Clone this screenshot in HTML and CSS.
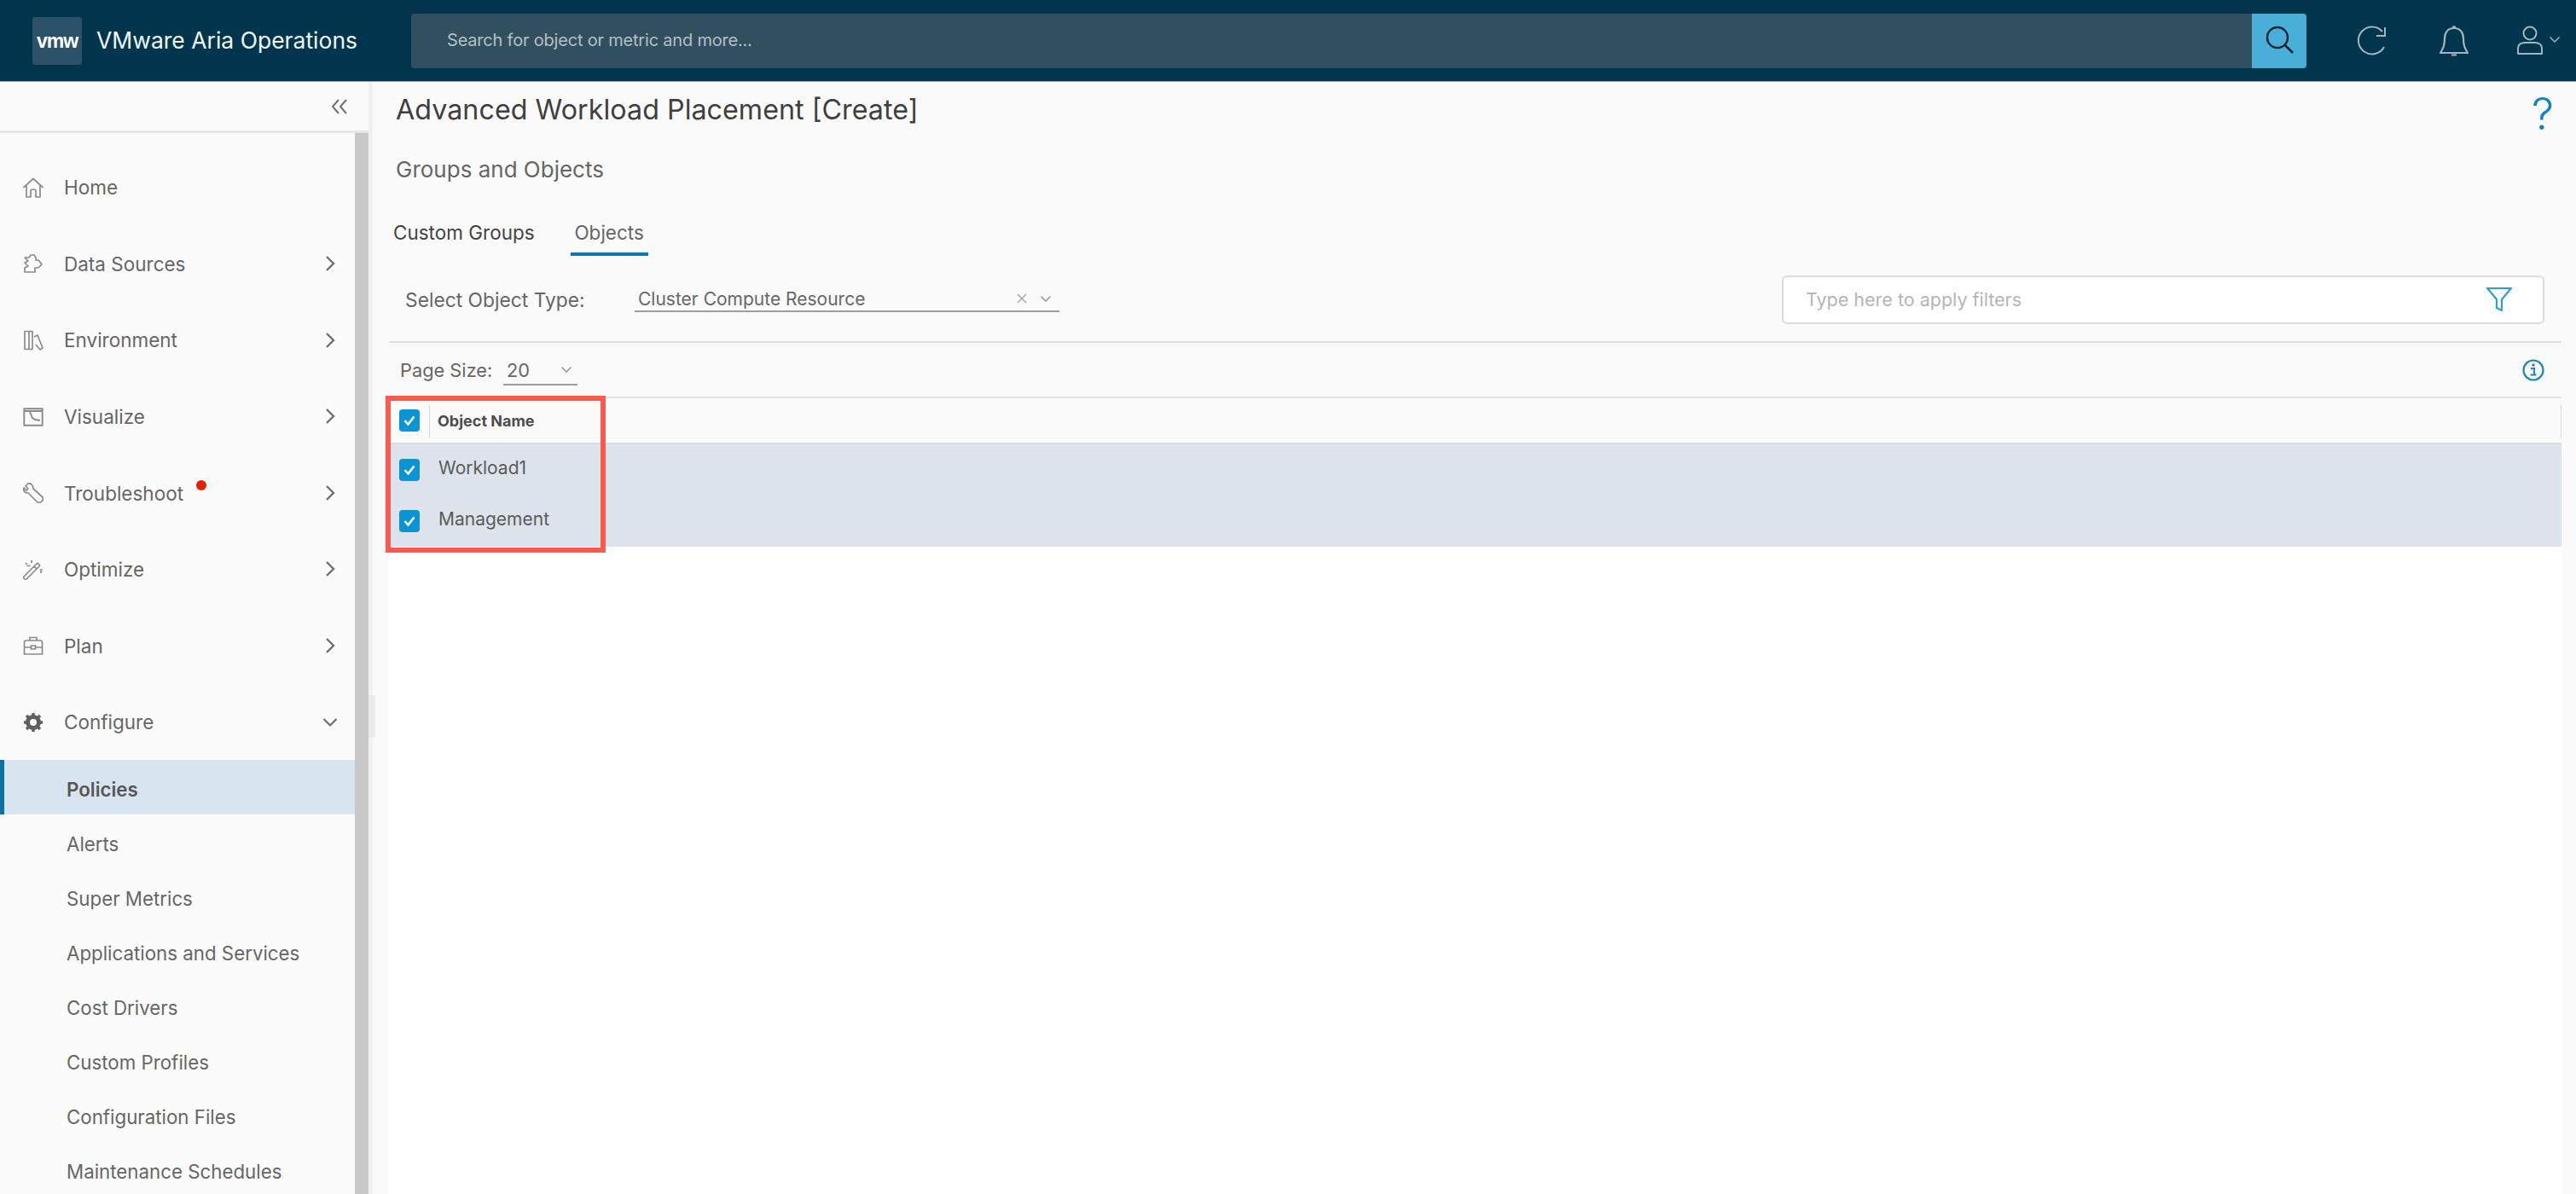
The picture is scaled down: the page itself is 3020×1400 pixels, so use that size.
FILE: index.html
```html
<!DOCTYPE html>
<html lang="en">
<head>
<meta charset="utf-8">
<title>VMware Aria Operations</title>
<link rel="stylesheet" href="styles.css">
</head>
<body>
<svg class="sprite" aria-hidden="true">
  <symbol id="chev-r" viewBox="0 0 12 20"><path d="M2 2l8 8-8 8" fill="none" stroke="#6f6f6f" stroke-width="2.4"/></symbol>
  <symbol id="chk" viewBox="0 0 24 26"><rect width="24" height="26" rx="4" fill="#0a94d3"/><path d="M6.5 13l4 4.5 7-9" fill="none" stroke="#fff" stroke-width="2.6"/></symbol>
  <symbol id="chev-d" viewBox="0 0 14 9"><path d="M1.5 1.5L7 7l5.5-5.5" fill="none" stroke="#9a9a9a" stroke-width="1.6"/></symbol>
</svg>
<header class="topbar">
  <div class="logo">vmw</div>
  <div class="brand">VMware Aria Operations</div>
  <div class="search">
    <span class="search-text">Search for object or metric and more...</span>
    <span class="search-btn">
      <svg width="34" height="36" viewBox="0 0 34 36"><circle cx="14" cy="14" r="12" fill="none" stroke="#12222c" stroke-width="2.4"/><path d="M23 23l9 9" stroke="#12222c" stroke-width="2.6"/></svg>
    </span>
  </div>
  <div class="top-icons">
    <svg class="ti-refresh" width="36" height="36" viewBox="0 0 36 36"><path d="M32 25A16 16 0 1 1 30 7" fill="none" stroke="#a6b4bb" stroke-width="2"/><path d="M33 2v10H23" fill="none" stroke="#a6b4bb" stroke-width="2"/></svg>
    <svg class="ti-bell" width="36" height="38" viewBox="0 0 36 38"><path d="M18 4c-7 0-11 5-11 12 0 9-2 12-5 17h32c-3-5-5-8-5-17 0-7-4-12-11-12zM16 2.500h4M15 35.500h6" fill="none" stroke="#a6b4bb" stroke-width="2.200" stroke-linejoin="round"/></svg>
    <span class="user">
      <svg width="32" height="36" viewBox="0 0 32 36"><circle cx="16" cy="9" r="7.500" fill="none" stroke="#a6b4bb" stroke-width="2"/><path d="M2 33v-6c0-5 4-7 8-7h12c4 0 8 2 8 7v6z" fill="none" stroke="#a6b4bb" stroke-width="2" stroke-linejoin="round"/></svg>
      <svg class="user-chev" width="14" height="9" viewBox="0 0 14 9"><path d="M1.500 1.500L7 7l5.500-5.500" fill="none" stroke="#a6b4bb" stroke-width="1.500"/></svg>
    </span>
  </div>
</header>
<div class="app">
  <aside class="sidebar">
    <div class="collapse">
      <svg width="20" height="20" viewBox="0 0 20 20"><path d="M9 2L2 10l7 8M18 2l-7 8 7 8" fill="none" stroke="#707070" stroke-width="2"/></svg>
    </div>
    <div class="side-body">
      <nav class="nav">
        <a class="nav-item"><svg class="nav-ic" viewBox="0 0 24 24"><path d="M.5 12L12 1.500 23.500 12M4 9.500V23h5v-7q0-2 3-2t3 2v7h5V9.500" fill="none" stroke="#8a8a8a" stroke-width="1.700" stroke-linejoin="round"/></svg><span>Home</span></a>
        <a class="nav-item"><svg class="nav-ic" viewBox="0 0 24 24"><path d="M2 5h5l2-3h4l2 3v3h3l4 5-4 4h-4v5H2v-5l4-2-4-4 4-2z" fill="none" stroke="#8a8a8a" stroke-width="1.700" stroke-linejoin="round"/></svg><span>Data Sources</span><svg class="nav-chev"><use href="#chev-r"/></svg></a>
        <a class="nav-item"><svg class="nav-ic" viewBox="0 0 24 24"><path d="M2 1.500h5v21H2zM7 1.500h4v21H7zM13 8l4-2 6 15-3 2-5-6" fill="none" stroke="#8a8a8a" stroke-width="1.700" stroke-linejoin="round"/></svg><span>Environment</span><svg class="nav-chev"><use href="#chev-r"/></svg></a>
        <a class="nav-item"><svg class="nav-ic" viewBox="0 0 24 24"><path d="M1.300 2.300h21.400v19.400H1.300zM1.300 5h21.400M8 6l3 7 3 2 6 1" fill="none" stroke="#8a8a8a" stroke-width="1.900"/></svg><span>Visualize</span><svg class="nav-chev"><use href="#chev-r"/></svg></a>
        <a class="nav-item"><svg class="nav-ic" viewBox="0 0 24 24"><path d="M6 1L3 4l3 3-2 2-3-3c-1 3 1 6 5 6l11 11q3 1 5-1t1-5L12 7c0-4-3-7-6-6z" fill="none" stroke="#8a8a8a" stroke-width="1.700" stroke-linejoin="round"/></svg><span>Troubleshoot</span><i class="dot"></i><svg class="nav-chev"><use href="#chev-r"/></svg></a>
        <a class="nav-item"><svg class="nav-ic" viewBox="0 0 24 24"><path d="M1 20L16 5q1-1 2 0l1 1q1 1 0 2L4 23q-1 1-2 0l-1-1q-1-1 0-2zM13 8l3 3M10 1v3M3 4l2 2M8.500 7.500h-4M21 13v3M23 12h-3" fill="none" stroke="#8a8a8a" stroke-width="1.700"/></svg><span>Optimize</span><svg class="nav-chev"><use href="#chev-r"/></svg></a>
        <a class="nav-item"><svg class="nav-ic" viewBox="0 0 24 24"><path d="M1.500 8q0-2 2-2h17q2 0 2 2v14h-21zM8 6V2.500h8V6M1.500 14h8M14.500 14h8M9.500 12h5v4h-5z" fill="none" stroke="#8a8a8a" stroke-width="1.700"/></svg><span>Plan</span><svg class="nav-chev"><use href="#chev-r"/></svg></a>
        <a class="nav-item"><svg class="nav-ic" viewBox="0 0 24 24"><circle cx="12" cy="12" r="6.500" fill="none" stroke="#5f5f5f" stroke-width="5"/><path d="M12 1v4M12 19v4M1 12h4M19 12h4M4 4l3 3M17 17l3 3M20 4l-3 3M7 17l-3 3" stroke="#5f5f5f" stroke-width="3.400"/></svg><span>Configure</span><svg class="nav-down" viewBox="0 0 18 12"><path d="M1.500 2L9 9.500 16.500 2" fill="none" stroke="#6f6f6f" stroke-width="2.200"/></svg></a>
      </nav>
      <ul class="subnav">
        <li class="sub-item active">Policies</li>
        <li class="sub-item">Alerts</li>
        <li class="sub-item">Super Metrics</li>
        <li class="sub-item">Applications and Services</li>
        <li class="sub-item">Cost Drivers</li>
        <li class="sub-item">Custom Profiles</li>
        <li class="sub-item">Configuration Files</li>
        <li class="sub-item">Maintenance Schedules</li>
      </ul>
    </div>
    <div class="scrollbar"></div>
  </aside>
  <main class="main">
    <i class="splitter"></i>
    <div class="title-row">
      <h1 class="title">Advanced Workload Placement [Create]</h1>
      <span class="help">?</span>
    </div>
    <h2 class="subtitle">Groups and Objects</h2>
    <div class="tabs">
      <span class="tab">Custom Groups</span>
      <span class="tab tab-on">Objects</span>
    </div>
    <div class="filter-row">
      <span class="type-label">Select Object Type:</span>
      <span class="type-select">
        <span class="type-value">Cluster Compute Resource</span>
        <svg class="type-x" width="12" height="12" viewBox="0 0 12 12"><path d="M1 1l10 10M11 1L1 11" stroke="#a5a5a5" stroke-width="1.500"/></svg>
        <svg class="small-chev"><use href="#chev-d"/></svg>
      </span>
      <span class="filter-box">
        <span class="filter-text">Type here to apply filters</span>
        <svg width="32" height="30" viewBox="0 0 32 30"><path d="M2 2h28L19 15v13l-6-3V15z" fill="none" stroke="#2f9fd0" stroke-width="2.200" stroke-linejoin="round"/></svg>
      </span>
    </div>
    <div class="page-row">
      <span class="page-label">Page Size:</span>
      <span class="page-select"><span>20</span><svg class="small-chev"><use href="#chev-d"/></svg></span>
      <svg class="info" width="28" height="28" viewBox="0 0 28 28"><circle cx="14" cy="14" r="11.500" fill="none" stroke="#1c87bf" stroke-width="2.200"/><path d="M11 12h4v7M10.500 19.500h7" fill="none" stroke="#1c87bf" stroke-width="2"/><circle cx="14" cy="8" r="1.700" fill="#1c87bf"/></svg>
    </div>
    <div class="grid">
      <div class="grid-head">
        <svg class="chk"><use href="#chk"/></svg>
        <span class="head-name">Object Name</span>
      </div>
      <div class="grid-row"><svg class="chk"><use href="#chk"/></svg><span class="cell">Workload1</span></div>
      <div class="grid-row"><svg class="chk"><use href="#chk"/></svg><span class="cell">Management</span></div>
      <div class="highlight"></div>
    </div>
  </main>
</div>
</body>
</html>
```
FILE: styles.css
```css
* { box-sizing: border-box; }
html, body { margin: 0; height: 100%; overflow: hidden; }
body { width: 3020px; height: 1400px; background: #fafafa; font-family: Inter, "Open Sans", "Liberation Sans", sans-serif; color: #565656; }
.sprite { display: none; }

.topbar { height: 96px; background: #00364d; border-bottom: 1px solid #8fa3ad; display: flex; align-items: center; padding-left: 38px; }
.logo { width: 58px; height: 56px; background: #2c5269; border-radius: 3px; color: #fff; font: 700 23px/56px "Liberation Sans", sans-serif; letter-spacing: -1px; text-align: center; }
.brand { width: 346px; margin-left: 17px; margin-top: -2px; color: #f3f6f7; font-size: 26.500px; white-space: nowrap; }
.search { width: 2222px; height: 64px; margin-left: 23px; background: #324f60; border-radius: 4px; display: flex; align-items: center; padding-left: 42px; position: relative; }
.search-text { flex: 1; color: #b4bfc6; font-size: 20px; letter-spacing: -.2px; margin-top: -2px; }
.search-btn { width: 64px; height: 64px; background: #49afd9; border-radius: 0 4px 4px 0; display: flex; align-items: center; justify-content: center; padding-left: 2px; }
.top-icons { display: flex; align-items: center; margin-left: 59px; }
.ti-bell { margin-left: 60px; }
.user { display: flex; margin-left: 55px; align-items: center; }
.user-chev { margin-left: 6px; margin-top: -2px; }

.app { display: flex; height: 1304px; }
.sidebar { width: 432px; flex: none; background: #fbfbfb; display: grid; grid-template-columns: 416px 16px; grid-template-rows: 60px 1fr; overflow: hidden; }
.collapse { grid-column: 1 / 3; border-bottom: 3px solid #e6e6e6; display: flex; justify-content: flex-end; align-items: center; padding-right: 24px; }
.side-body { overflow: hidden; }
.scrollbar { background: #c8c8c8; }
.nav { padding-top: 18.500px; }
.nav-item { height: 89.6px; display: flex; align-items: center; padding: 1px 0 0 27px; font-size: 22.500px; color: #666; position: relative; }
.nav-ic { width: 24px; height: 24px; flex: none; margin-right: 24px; }
.nav-chev { width: 12px; height: 20px; position: absolute; left: 381px; top: 35px; }
.nav-down { width: 18px; height: 12px; position: absolute; left: 378px; top: 39px; }
.dot { width: 12px; height: 12px; border-radius: 50%; background: #e12200; margin-left: 15px; margin-top: -18px; }
.subnav { list-style: none; margin: 0; padding: 0; }
.sub-item { height: 64px; line-height: 69px; padding-left: 78px; font-size: 22.300px; color: #666; white-space: nowrap; overflow: hidden; }
.sub-item.active { background: #d8e5f0; border-left: 5px solid #0f6f9e; padding-left: 73px; font-weight: 600; color: #575757; }

.main { flex: 1; min-width: 0; border-left: 5px solid #f1f1f1; padding: 0 17px 0 18px; position: relative; display: flex; flex-direction: column; }
.splitter { position: absolute; left: -5px; top: 719px; width: 8px; height: 50px; background: #ececec; border-radius: 0 3px 3px 0; }
.title-row { height: 69px; display: flex; align-items: center; justify-content: space-between; padding: 0 9px 4px 9px; flex: none; }
.title { margin: 0; font-size: 32.300px; font-weight: 400; color: #3f3f3f; }
.help { font-size: 52px; font-weight: 300; color: #0f83c4; line-height: 1; margin-top: 10px; }
.subtitle { margin: 0; height: 66px; flex: none; line-height: 67px; padding-left: 9px; font-size: 26px; font-weight: 400; color: #666; }
.tabs { height: 69px; flex: none; display: flex; align-items: flex-end; padding-left: 6px; }
.tab { font-size: 22.500px; color: #444; padding-bottom: 14px; }
.tab-on { margin-left: 42px; padding: 0 0 10px; border-bottom: 4px solid #0d77b5; color: #666; width: 91px; text-align: center; }
.filter-row { height: 102px; flex: none; border-bottom: 2px solid #dedede; display: flex; align-items: center; padding: 0 20px 0 19px; margin-left: 1px; }
.type-label { font-size: 22.800px; color: #666; width: 269px; margin-top: 3px; }
.type-select { width: 498px; height: 34px; border-bottom: 2px solid #9d9d9d; display: flex; align-items: center; padding: 4px 9px 0 4px; margin-top: -2px; }
.type-value { flex: 1; font-size: 21px; color: #666; }
.type-x { margin-right: 15px; }
.small-chev { width: 14px; height: 9px; }
.filter-box { width: 894px; height: 57px; margin-left: auto; margin-top: 2px; background: #fff; border: 2px solid #dcdcdc; border-radius: 6px; display: flex; align-items: center; justify-content: space-between; padding: 0 35px 0 26px; }
.filter-text { font-size: 21.500px; color: #b5b5b5; }
.page-row { height: 63px; flex: none; display: flex; align-items: center; padding: 0 19px 0 14px; }
.page-label { font-size: 21.800px; color: #666; width: 121px; }
.page-select { width: 87px; height: 34px; border-bottom: 2px solid #9d9d9d; display: flex; align-items: center; justify-content: space-between; font-size: 21.800px; padding: 0 6px 0 4px; color: #666; margin-top: 2px; }
.info { margin-left: auto; }

.grid { flex: 1; position: relative; background: #fff; border-top: 2px solid #e2e2e2; }
.grid-head { height: 54px; background: #fafafa; border-bottom: 2px solid #dcdcdc; display: flex; align-items: center; padding-left: 13px; position: relative; }
.grid-head::before { content: ""; position: absolute; left: 48px; top: 8px; width: 1px; height: 38px; background: #d8d8d8; }
.grid-head::after { content: ""; position: absolute; right: 0; top: 8px; width: 1px; height: 38px; background: #d8d8d8; }
.chk { width: 24px; height: 26px; flex: none; }
.head-name { margin-left: 21px; font-size: 18px; font-weight: 700; color: #4d4d4d; }
.grid-row { height: 60px; background: #dce3ea; display: flex; align-items: center; padding-left: 13px; }
.cell { margin-left: 22px; margin-top: -6px; font-size: 21px; color: #5b5b5b; }
.highlight { position: absolute; left: -3px; top: -3px; width: 258px; height: 184px; border: 6px solid #fb5b4e; }
```
